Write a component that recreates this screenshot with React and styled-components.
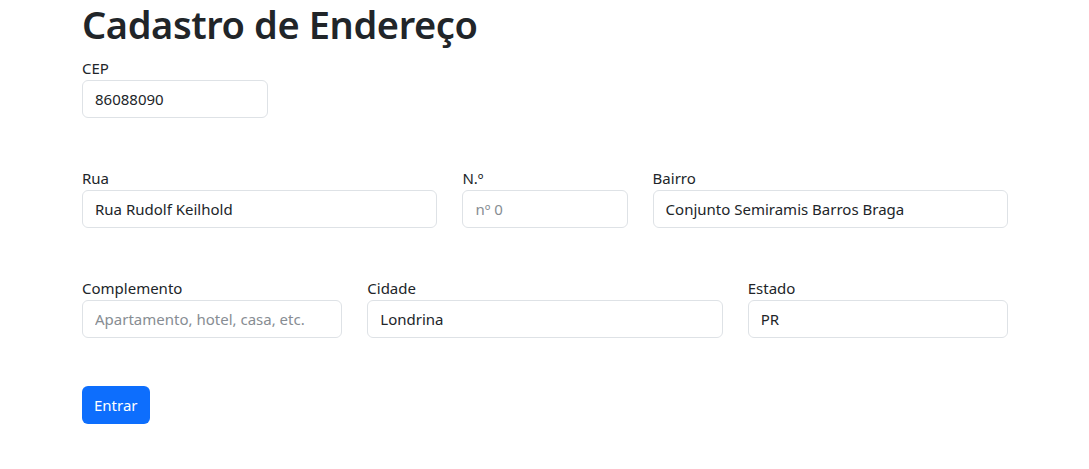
import styled, { createGlobalStyle } from "styled-components"

const Global = createGlobalStyle`
    body {
        margin: 0;
        background: #fff;
        color: #212529;
        font-family: "Noto Sans", "Open Sans", sans-serif;
    }
`
const Page = styled.main`
    width: 926px;
    margin-left: 82px;
    display: flex;
    flex-direction: column;
`
const Title = styled.h1`
    margin: 1px 0 11px;
    font-size: 38px;
    line-height: 46px;
    font-weight: 600;
    letter-spacing: -0.4px;
`
const Row = styled.div`
    display: grid;
    grid-template-columns: ${(p) => p.cols};
    column-gap: 25px;
    margin-bottom: ${(p) => p.space || 50}px;
`
const Field = styled.div`
    display: flex;
    flex-direction: column;
`
const Label = styled.label`
    font-size: 15px;
    line-height: 20px;
    margin-bottom: 2px;
`
const Input = styled.input`
    box-sizing: border-box;
    height: 38px;
    width: 100%;
    padding: 6px 12px;
    border: 1px solid #dee2e6;
    border-radius: 6px;
    font-family: inherit;
    font-size: 15px;
    color: #212529;
    background: #fff;
    outline: none;
    &::placeholder {
        color: #878d93;
    }
`
const Button = styled.button`
    align-self: flex-start;
    height: 38px;
    padding: 0 12px;
    border: none;
    border-radius: 6px;
    background-color: #0d6efd;
    color: #fff;
    font-family: inherit;
    font-size: 15px;
    cursor: pointer;
`

const FormField = ({ label, value, placeholder }) => (
    <Field>
        <Label>{label}</Label>
        <Input defaultValue={value} placeholder={placeholder} />
    </Field>
)

const App = () => {
    return (
        <Page>
            <Global />
            <Title>Cadastro de Endereço</Title>
            <Row cols="186px">
                <FormField label="CEP" value="86088090" />
            </Row>
            <Row cols="355fr 165fr 355fr">
                <FormField label="Rua" value="Rua Rudolf Keilhold" />
                <FormField label="N.º" placeholder="nº 0" />
                <FormField label="Bairro" value="Conjunto Semiramis Barros Braga" />
            </Row>
            <Row cols="260fr 355fr 260fr" space={48}>
                <FormField label="Complemento" placeholder="Apartamento, hotel, casa, etc." />
                <FormField label="Cidade" value="Londrina" />
                <FormField label="Estado" value="PR" />
            </Row>
            <Button>Entrar</Button>
        </Page>
    )
}

export default App
